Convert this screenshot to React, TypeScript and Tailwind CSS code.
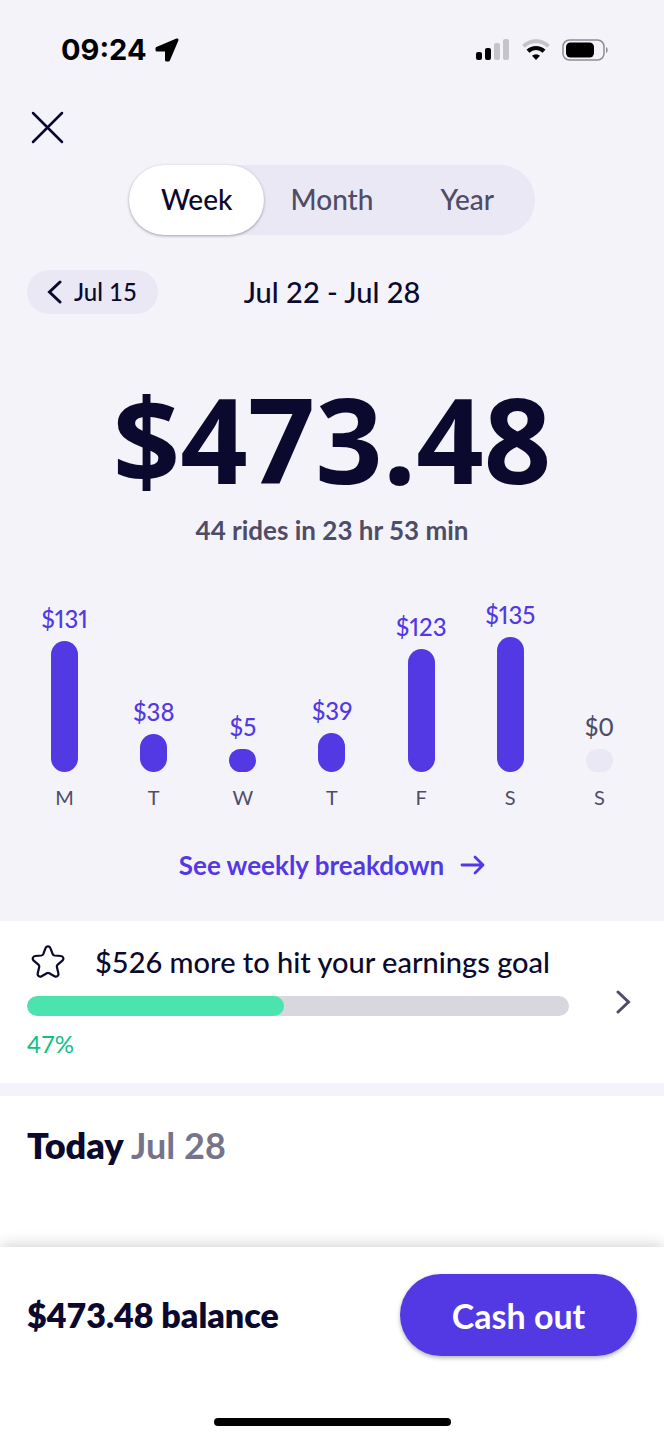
import React, { useState } from 'react';

interface Day {
  label: string;
  amount: number;
}

const days: Day[] = [
  { label: 'M', amount: 131 },
  { label: 'T', amount: 38 },
  { label: 'W', amount: 5 },
  { label: 'T', amount: 39 },
  { label: 'F', amount: 123 },
  { label: 'S', amount: 135 },
  { label: 'S', amount: 0 },
];

const periods = ['Week', 'Month', 'Year'];

const StatusBar: React.FC = () => (
  <div className="flex h-[100px] items-center justify-between pr-[55px] pl-[61px]">
    <div className="flex items-center gap-2 text-black">
      <span className="font-['Inter',sans-serif] text-[29px] leading-8 font-bold">09:24</span>
      <svg width="24" height="24" viewBox="0 0 24 24" fill="currentColor" stroke="currentColor" strokeWidth="3" strokeLinejoin="round" aria-hidden="true">
        <path d="M22 2L2 10.500v1.500h9.500v10H13.500Z" />
      </svg>
    </div>
    <div className="flex items-center gap-3">
      <svg width="34" height="22" viewBox="0 0 34 22" aria-hidden="true">
        <rect x="0" y="13" width="6" height="8" rx="2" />
        <rect x="9" y="9" width="6" height="12" rx="2" />
        <rect x="18" y="4" width="6" height="17" rx="2" fill="#c5c4ca" />
        <rect x="27" y="0" width="6" height="21" rx="2" fill="#c5c4ca" />
      </svg>
      <svg width="28" height="22" viewBox="0 0 28 22" fill="none" aria-hidden="true">
        <path d="M1.500 7.300a18 18 0 0 1 25 0" stroke="#c5c4ca" strokeWidth="4" />
        <path d="M6 12.200a11.600 11.600 0 0 1 16 0" stroke="#000" strokeWidth="4.200" />
        <path d="M14 21l-4-4.200a5.800 5.800 0 0 1 8 0Z" fill="#000" />
      </svg>
      <svg width="47" height="22" viewBox="0 0 47 22" fill="none" aria-hidden="true">
        <rect x="1" y="1" width="41" height="20" rx="6.500" stroke="#8e8d93" strokeWidth="1.500" />
        <rect x="4" y="3.500" width="28" height="15" rx="4.500" fill="#000" />
        <path d="M44 8v6c2.200-.8 2.200-5.200 0-6Z" fill="#8e8d93" />
      </svg>
    </div>
  </div>
);

const PeriodTabs: React.FC = () => {
  const [active, setActive] = useState('Week');

  return (
    <div className="mx-auto mt-[11px] grid h-[70px] w-[406px] grid-cols-3 rounded-full bg-[#eae8f4]">
      {periods.map((period) => (
        <button
          key={period}
          onClick={() => setActive(period)}
          aria-pressed={period === active}
          className={
            period === active
              ? 'rounded-full bg-white pb-[2px] text-[28px] font-medium text-[#0b0a2e] shadow-[0_1px_3px_rgba(0,0,0,0.35)]'
              : 'rounded-full pb-[2px] text-[28px] font-medium text-[#4e4c66]'
          }
        >
          {period}
        </button>
      ))}
    </div>
  );
};

const DayColumn: React.FC<{ day: Day }> = ({ day }) => {
  const empty = day.amount === 0;

  return (
    <div className="flex flex-col items-center justify-end">
      <span
        className={
          empty
            ? 'mb-2 text-2xl leading-7 font-medium text-[#4e4c66] proportional-nums'
            : 'mb-2 text-2xl leading-7 font-medium text-[#5239e3] proportional-nums'
        }
      >
        ${day.amount}
      </span>
      {/* Small amounts still get a visible pill */}
      <div
        className={empty ? 'w-[27px] rounded-full bg-[#eae8f4]' : 'w-[27px] rounded-full bg-[#5239e3]'}
        style={{ height: Math.max(23, day.amount) }}
      />
      <span className="mt-3 text-xl leading-[26px] text-[#4e4c66]">{day.label}</span>
    </div>
  );
};

const GoalSection: React.FC = () => (
  <section className="flex h-[162px] items-center bg-white pr-[33px] pl-[27px]">
    <div className="flex-1">
      <div className="flex items-center gap-[30px] pl-1">
        <svg width="34" height="34" viewBox="0 0 34 34" fill="none" stroke="#0b0a2e" strokeWidth="2.200" strokeLinejoin="round" aria-hidden="true">
          <path d="M14.500 3.100c.9-2.200 4-2.200 4.900 0l2.200 5.800c.3.900 1.100 1.500 2 1.600l6.300.5c2.400.2 3.300 3.100 1.500 4.600l-4.700 4c-.7.6-1 1.500-.8 2.400l1.500 6.400c.5 2.300-1.900 4.100-3.900 2.900l-5.200-3.100c-.8-.5-1.700-.5-2.500 0l-5.200 3.100c-2 1.200-4.400-.6-3.900-2.900l1.500-6.400c.2-.9-.1-1.800-.8-2.400l-4.700-4C.9 14.100 1.800 11.200 4.200 11l6.200-.5c.9-.1 1.600-.7 2-1.600Z" />
        </svg>
        <h2 className="text-[29px] leading-9 font-medium whitespace-nowrap">$526 more to hit your earnings goal</h2>
      </div>
      <div className="mt-4 h-5 overflow-hidden rounded-full bg-[#d8d7dd]" role="progressbar" aria-label="Earnings goal" aria-valuenow={47}>
        <div className="h-full rounded-full bg-[#4be4ae]" style={{ width: '47.4%' }} />
      </div>
      <p className="mt-3 text-2xl leading-8 text-[#10c082]">47%</p>
    </div>
    <button aria-label="Open earnings goal" className="ml-[47px]">
      <svg width="15" height="24" viewBox="0 0 15 24" fill="none" stroke="#4e4c66" strokeWidth="3" strokeLinecap="round" aria-hidden="true">
        <path d="M2 2l10.500 10L2 22" />
      </svg>
    </button>
  </section>
);

const Footer: React.FC = () => (
  <footer className="relative bg-white pb-[14px] shadow-[0_-2px_14px_rgba(0,0,0,0.18)]">
    <div className="flex items-center justify-between px-[27px] pt-[27px]">
      <p className="text-[34px] leading-10 font-extrabold">$473.48 balance</p>
      <button className="h-[82px] w-[237px] rounded-full bg-[#5239e3] text-[34px] font-bold text-white shadow-[0_2px_4px_rgba(0,0,0,0.3)]">
        Cash out
      </button>
    </div>
    <div className="mx-auto mt-[62px] h-2 w-[237px] rounded-full bg-black" />
  </footer>
);

export default function App() {
  return (
    <div className="flex min-h-screen flex-col bg-[#f4f3fa] font-['Lato',sans-serif] text-[#0b0a2e]">
      <StatusBar />
      <main className="flex flex-1 flex-col">
        <div className="flex h-[54px] items-center pl-[31px]">
          <button aria-label="Close">
            <svg width="33" height="33" viewBox="0 0 33 33" fill="none" stroke="currentColor" strokeWidth="2.500" strokeLinecap="round" aria-hidden="true">
              <path d="M2 2l29 29M31 2L2 31" />
            </svg>
          </button>
        </div>

        <PeriodTabs />

        <div className="mt-[35px] grid grid-cols-[1fr_auto_1fr] items-center px-[27px]">
          <button className="flex h-11 w-[131px] items-center gap-3 rounded-full bg-[#eae8f4] pl-5 text-2xl font-medium">
            <svg width="15" height="24" viewBox="0 0 15 24" fill="none" stroke="currentColor" strokeWidth="3" strokeLinecap="round" aria-hidden="true">
              <path d="M13 2L2.500 12 13 22" />
            </svg>
            Jul 15
          </button>
          <p className="text-[29px] leading-9 font-medium">Jul 22 - Jul 28</p>
        </div>

        <h1 className="mt-[67px] text-center font-['Open_Sans',sans-serif] text-[118px] leading-[116px] font-bold">$473.48</h1>
        <p className="mt-[17px] text-center text-[26px] leading-8 font-bold text-[#4e4c66]">44 rides in 23 hr 53 min</p>

        <div className="grid h-[264px] grid-cols-7 px-5">
          {days.map((day, i) => (
            <DayColumn key={i} day={day} />
          ))}
        </div>

        <a href="#breakdown" className="mx-auto mt-[39px] mb-10 flex items-center gap-4 text-[26px] leading-8 font-bold text-[#5239e3]">
          See weekly breakdown
          <svg width="25" height="20" viewBox="0 0 25 20" fill="none" stroke="currentColor" strokeWidth="2.800" strokeLinecap="round" strokeLinejoin="round" aria-hidden="true">
            <path d="M2 10h21M15 2l8 8-8 8" />
          </svg>
        </a>

        <GoalSection />

        <section className="mt-[13px] flex-1 bg-white px-[27px] pt-7">
          <h2 className="text-[36px] leading-[42px] font-extrabold">
            Today <span className="font-bold text-[#76738a]">Jul 28</span>
          </h2>
        </section>
      </main>
      <Footer />
    </div>
  );
}
